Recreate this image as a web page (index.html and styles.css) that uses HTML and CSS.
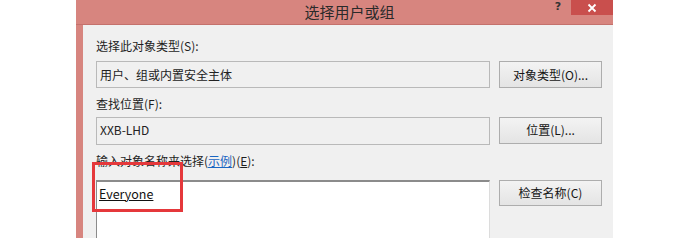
FILE: index.html
```html
<!DOCTYPE html>
<html>
<head>
<meta charset="utf-8">
<link rel="stylesheet" href="styles.css">
</head>
<body>
<div class="window">
  <div class="titlebar">
    <div class="title">选择用户或组</div>
    <div class="help">?</div>
    <div class="close">
      <svg width="10" height="10" viewBox="0 0 10 10"><path d="M1.5 1.5 L8.5 8.5 M8.5 1.5 L1.5 8.5" stroke="#fff" stroke-width="1.8" fill="none"/></svg>
    </div>
  </div>
  <div class="panel">
    <div class="grid">
      <div class="label l1">选择此对象类型(S):</div>
      <div class="field">用户、组或内置安全主体</div>
      <div class="btn">对象类型(O)...</div>
      <div class="label l2">查找位置(F):</div>
      <div class="field f2">XXB-LHD</div>
      <div class="btn b2">位置(L)...</div>
      <div class="label l3">输入对象名称来选择(<span class="link">示例</span>)(<span class="u">E</span>):</div>
      <div class="textarea"><span class="name">Everyone</span></div>
      <div class="btn b3">检查名称(C)</div>
    </div>
    <div class="highlight"></div>
  </div>
</div>
</body>
</html>
```
FILE: styles.css
```css
html, body {
  margin: 0;
  padding: 0;
  background: #ffffff;
  font-family: "Noto Sans CJK SC", "Noto Sans", sans-serif;
}
.window {
  margin-left: 76px;
  width: 537px;
  height: 238px;
  display: flex;
  flex-direction: column;
  overflow: hidden;
}
.titlebar {
  height: 24px;
  background: #d7857f;
  border-bottom: 1px solid #c4716c;
  display: flex;
  align-items: flex-start;
  flex-shrink: 0;
}
.title {
  flex: 1;
  padding-left: 78px;
  text-align: center;
  font-size: 15px;
  line-height: 24px;
  color: #2a2a2a;
}
.help {
  width: 26px;
  text-align: center;
  font-size: 11px;
  font-weight: bold;
  line-height: 14px;
  color: #333;
  font-family: "DejaVu Sans", sans-serif;
}
.close {
  width: 42px;
  height: 15px;
  background: #c94f4d;
  display: flex;
  align-items: center;
  justify-content: center;
}
.panel {
  position: relative;
  flex: 1;
  background: #f0f0f0;
  border-left: 7px solid #d7857f;
  padding: 13px 11px 0 13px;
  overflow: hidden;
}
.grid {
  display: grid;
  grid-template-columns: 394px 103px;
  column-gap: 9px;
  align-items: start;
}
.label {
  grid-column: 1 / -1;
  font-size: 12px;
  line-height: 16px;
  height: 16px;
  color: #1e1e1e;
}
.l2, .l3 { margin-top: 8px; }
.field {
  margin-top: 7px;
  height: 27px;
  box-sizing: border-box;
  border: 1px solid #b9b9b9;
  background: #f0f0f0;
  padding-left: 3px;
  font-size: 12px;
  line-height: 25px;
  color: #222;
}
.f2 { margin-top: 5px; height: 28px; line-height: 24px; }
.btn {
  margin-top: 7px;
  height: 27px;
  box-sizing: border-box;
  border: 1px solid #adadad;
  background: linear-gradient(#f3f3f3, #e4e4e4);
  text-align: center;
  font-size: 12px;
  line-height: 25px;
  color: #151515;
}
.b2 { margin-top: 5px; height: 27px; line-height: 23px; }
.b3 { margin-top: 11px; height: 26px; line-height: 24px; }
.link {
  color: #1a66c2;
  text-decoration: underline;
}
.u { text-decoration: underline; }
.textarea {
  margin-top: 11px;
  height: 70px;
  box-sizing: border-box;
  background: #ffffff;
  border-top: 2px solid #8b8b8b;
  border-left: 1px solid #8b8b8b;
  border-right: 1px solid #dcdcdc;
  padding: 2px 2px;
  font-size: 12.5px;
  line-height: 20px;
  color: #111;
}
.name { text-decoration: underline; }
.highlight {
  position: absolute;
  left: 9px;
  top: 137px;
  width: 91px;
  height: 50px;
  box-sizing: border-box;
  border: 3px solid #e5383b;
}
```
